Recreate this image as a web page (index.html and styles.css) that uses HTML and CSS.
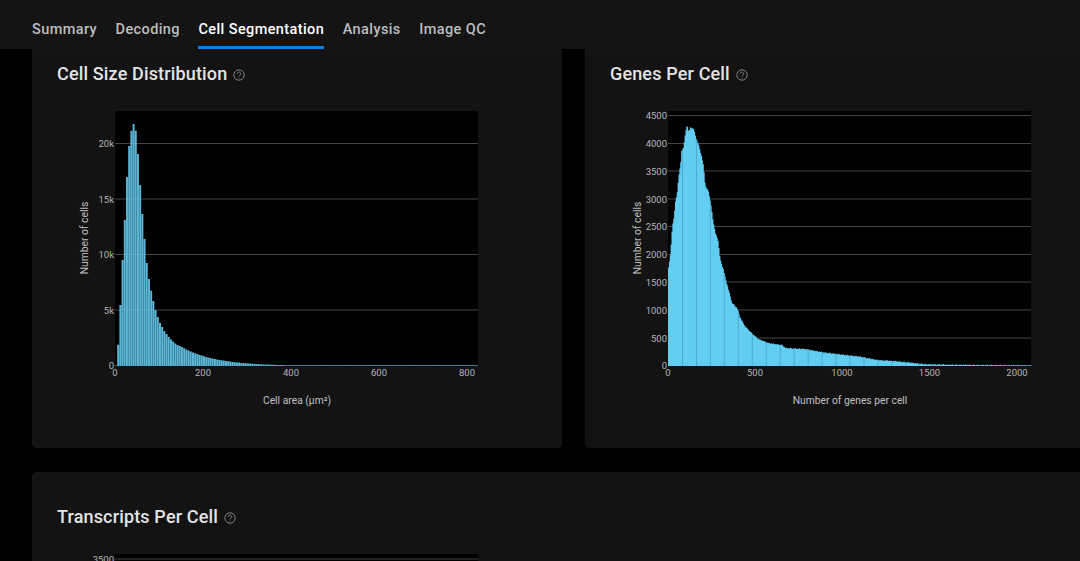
FILE: index.html
```html
<!DOCTYPE html>
<html lang="en">
<head>
<meta charset="utf-8">
<title>Cell Segmentation</title>
<link rel="stylesheet" href="styles.css">
</head>
<body>
<header class="tabs">
  <a class="tab">Summary</a>
  <a class="tab">Decoding</a>
  <a class="tab active">Cell Segmentation</a>
  <a class="tab">Analysis</a>
  <a class="tab">Image QC</a>
</header>
<main class="grid">
  <section class="card first">
    <h2 class="title">Cell Size Distribution
      <svg class="help" viewBox="0 0 12 12"><circle cx="6" cy="6" r="5.2"/><path d="M4.3 4.7a1.7 1.7 0 1 1 2.6 1.5c-.6.4-.9.7-.9 1.3"/><circle class="dot" cx="6" cy="9" r=".6"/></svg>
    </h2>
    <svg class="chart" viewBox="0 0 530 348">
      <rect class="plot" x="83" y="11" width="363" height="255"/>
      <g class="lines">
        <path d="M83 43.5H446M83 99H446M83 154.5H446M83 210H446"/>
      </g>
      <path class="bars size" id="size-bars"/>
      <g class="ticks-y">
        <text x="82" y="47">20k</text><text x="82" y="102.500">15k</text><text x="82" y="158">10k</text><text x="82" y="213.500">5k</text><text x="82" y="269">0</text>
      </g>
      <g class="ticks-x">
        <text x="83" y="276">0</text><text x="171" y="276">200</text><text x="259" y="276">400</text><text x="347" y="276">600</text><text x="435" y="276">800</text>
      </g>
      <text class="axis" x="265" y="304">Cell area (µm²)</text>
      <text class="axis" transform="translate(55.500 138) rotate(-90)">Number of cells</text>
    </svg>
  </section>
  <section class="card first">
    <h2 class="title">Genes Per Cell
      <svg class="help" viewBox="0 0 12 12"><circle cx="6" cy="6" r="5.2"/><path d="M4.3 4.7a1.7 1.7 0 1 1 2.6 1.5c-.6.4-.9.7-.9 1.3"/><circle class="dot" cx="6" cy="9" r=".6"/></svg>
    </h2>
    <svg class="chart" viewBox="0 0 530 348">
      <rect class="plot" x="83" y="11" width="363" height="255"/>
      <g class="lines">
        <path d="M83 15.500H446M83 43.500H446M83 71H446M83 99H446M83 126.500H446M83 154.500H446M83 182H446M83 210H446M83 238H446"/>
      </g>
      <path class="bars genes" id="genes-bars"/>
      <path class="bars genes-dark" id="genes-dark"/>
      <g class="ticks-y">
        <text x="82" y="19">4500</text><text x="82" y="47">4000</text><text x="82" y="74.500">3500</text><text x="82" y="102.500">3000</text><text x="82" y="130">2500</text><text x="82" y="158">2000</text><text x="82" y="185.500">1500</text><text x="82" y="213.500">1000</text><text x="82" y="241.500">500</text><text x="82" y="269">0</text>
      </g>
      <g class="ticks-x">
        <text x="83" y="276">0</text><text x="170" y="276">500</text><text x="257" y="276">1000</text><text x="344.500" y="276">1500</text><text x="432" y="276">2000</text>
      </g>
      <text class="axis" x="265" y="304">Number of genes per cell</text>
      <text class="axis" transform="translate(55.500 138) rotate(-90)">Number of cells</text>
    </svg>
  </section>
  <section class="card wide">
    <h2 class="title">Transcripts Per Cell
      <svg class="help" viewBox="0 0 12 12"><circle cx="6" cy="6" r="5.2"/><path d="M4.3 4.7a1.7 1.7 0 1 1 2.6 1.5c-.6.4-.9.7-.9 1.3"/><circle class="dot" cx="6" cy="9" r=".6"/></svg>
    </h2>
    <svg class="chart" viewBox="0 0 530 348">
      <rect class="plot" x="83" y="11" width="363" height="255"/>
      <g class="lines"><path d="M83 16H446"/></g>
      <g class="ticks-y"><text x="82" y="19.500">3500</text></g>
    </svg>
  </section>
</main>
<script src="charts.js"></script>
</body>
</html>
```
FILE: styles.css
```css
* { box-sizing: border-box; }
html, body { margin: 0; height: 561px; overflow: hidden; background: #000; }
body { font-family: Roboto, "Liberation Sans", sans-serif; width: 1080px; }

.tabs {
  position: relative;
  z-index: 2;
  display: flex;
  gap: 18.5px;
  height: 49px;
  padding-left: 32px;
  background: #141414;
}
.tab {
  display: flex;
  align-items: center;
  height: 49px;
  padding-top: 13px;
  border-bottom: 3px solid transparent;
  font-size: 14.5px;
  font-weight: 500;
  letter-spacing: 0.4px;
  color: #bdbdbd;
  white-space: nowrap;
}
.tab.active { color: #fff; border-bottom-color: #0a7fe6; }

.grid {
  display: grid;
  grid-template-columns: 530px 530px;
  column-gap: 23px;
  row-gap: 24px;
  width: 1200px;
  margin-top: -20px;
  padding-left: 32px;
}
.card {
  height: 419px;
  background: #131313;
  border-radius: 5px;
}
.card.wide { grid-column: 1 / span 2; }
.title {
  display: flex;
  align-items: center;
  gap: 6px;
  height: 24px;
  margin: 32px 0 15px;
  padding-left: 25px;
  font-size: 18px;
  font-weight: 500;
  letter-spacing: 0.15px;
  color: #e4e4e4;
  white-space: nowrap;
}
.help { width: 12px; height: 12px; margin-top: 3px; fill: none; stroke: #808080; stroke-width: 1; }
.help .dot { fill: #808080; stroke: none; }

.chart { display: block; width: 530px; height: 348px; }
.plot { fill: #000; }
.lines path { stroke: #454545; stroke-width: 1; fill: none; }
.bars.size { fill: #62c6e8; fill-opacity: 0.93; }
.bars.genes { fill: #60cdf1; }
.bars.genes-dark { fill: #4da6c6; }
.chart text { font-family: Roboto, "Liberation Sans", sans-serif; font-size: 9.5px; fill: #b4b4b4; }
.ticks-y text { text-anchor: end; }
.ticks-x text { text-anchor: middle; }
.chart .axis { font-size: 10.3px; text-anchor: middle; fill: #c0c0c0; }
```
FILE: charts.js
```js
// Histogram data traced per bin, in plot coordinates of the chart's viewBox.
(function () {
  var BASE = 266;

  function sizeTop(i) {
    var peak = [265.5, 244.7, 205, 160, 120, 77, 46, 30.7, 24, 30.7, 54, 85, 114, 139, 163, 179,
      190.7, 201, 210, 217, 222.7, 227, 231, 234, 237, 239.5, 241.5, 243.5, 245, 246, 247];
    if (i < peak.length) return peak[i];
    var t = 266 - 19 * Math.exp(-(i - 30) / 15);
    return Math.min(t, 265.3);
  }

  var sizePath = '';
  for (var i = 0; i < 165; i++) {
    var x = 83 + i * 2.2;
    sizePath += 'M' + x.toFixed(2) + ' ' + BASE + 'V' + sizeTop(i).toFixed(1) + 'h1.95V' + BASE + 'z';
  }
  document.getElementById('size-bars').setAttribute('d', sizePath);

  // x, y outline points for genes per cell, in screenshot pixels
  var outline = [[668,268],[670,253],[671,240],[671.7,228],[673.3,218],[675,201.7],[676.7,193],[678.3,175],[680,165],
    [681,151.7],[683.3,146.7],[684.3,136.7],[686.7,124.3],[688.3,131.7],[690,127.3],[693.3,129],[695.7,138],
    [698.3,145],[701,155],[703.3,166.7],[705,186],[708.3,191.7],[710.7,205],[712.3,218],[715,233],[717.7,240],
    [720,260],[723.3,270],[725,278],[728.3,290],[731.7,303],[736.7,308],[740,318],[745,326.7],[753.3,335],
    [758,339],[768,343],[781.7,345],[785,348],[805,349],[825,352.7],[845,355],[860,356.7],[876.7,360],[893,361],
    [910,362.7],[926.7,364.3],[950,364.7],[1031,365.4]];

  function genesTop(px) {
    for (var k = 1; k < outline.length; k++) {
      if (px <= outline[k][0]) {
        var a = outline[k - 1], b = outline[k];
        return a[1] + (b[1] - a[1]) * (px - a[0]) / (b[0] - a[0]);
      }
    }
    return 365.4;
  }

  var genesPath = '', darkPath = '';
  var step = 0.873;
  for (var j = 0; 668 + j * step < 1031; j++) {
    var px = 668 + j * step;
    var wobble = ((j * 7) % 5 - 2) * 0.22;
    var barTop = Math.min(genesTop(px) + wobble - 100, 265.4);
    var bx = (px - 585).toFixed(2);
    genesPath += 'M' + bx + ' ' + BASE + 'V' + barTop.toFixed(1) + 'h' + (step + 0.02) + 'V' + BASE + 'z';
    if (j % 16 === 0 && j > 0) {
      darkPath += 'M' + bx + ' ' + BASE + 'V' + (barTop + 0.5).toFixed(1) + 'h0.9V' + BASE + 'z';
    }
  }
  document.getElementById('genes-bars').setAttribute('d', genesPath);
  document.getElementById('genes-dark').setAttribute('d', darkPath);
})();
```
